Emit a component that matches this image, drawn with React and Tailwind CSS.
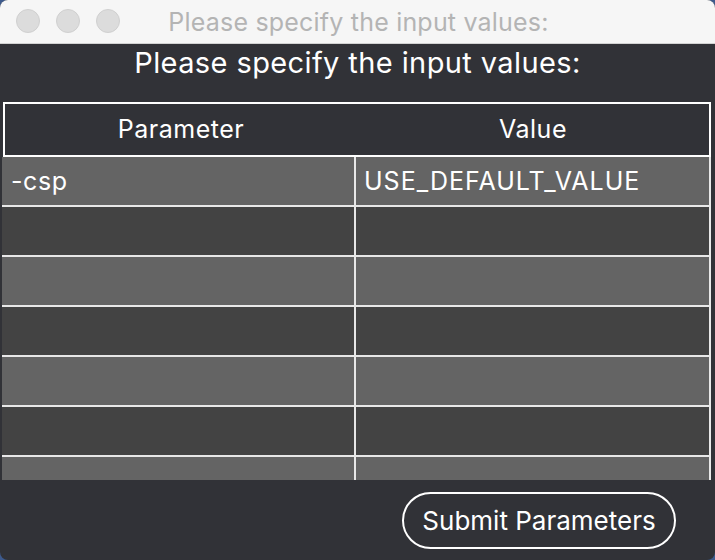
export default function App() {
  const rows = [
    ["-csp", "USE_DEFAULT_VALUE"],
    ["", ""],
    ["", ""],
    ["", ""],
    ["", ""],
    ["", ""],
    ["", ""],
  ];
  return (
    <div className="w-[715px] h-[560px] bg-[#3d5a8c] overflow-hidden leading-none" style={{ fontFamily: 'Inter, "Liberation Sans", Arial, sans-serif' }}>
      <div className="w-[715px] h-[560px] rounded-[8px] overflow-hidden flex flex-col bg-[#313237]">
        <div className="h-[44px] shrink-0 bg-[#f6f6f6] border-b border-[#d2d2d2] relative flex items-center justify-center">
          <div className="absolute left-[16px] top-[9px] flex gap-[16px]">
            <div className="w-[24px] h-[24px] rounded-full bg-[#dcdcdc] border border-[#d0d0d0]" />
            <div className="w-[24px] h-[24px] rounded-full bg-[#dcdcdc] border border-[#d0d0d0]" />
            <div className="w-[24px] h-[24px] rounded-full bg-[#dcdcdc] border border-[#d0d0d0]" />
          </div>
          <span className="text-[25px] tracking-[0.2px] text-[#b4b4b4] pl-[2px] pt-[2px]">Please specify the input values:</span>
        </div>
        <div className="h-[58px] shrink-0 flex items-start justify-center pt-[4px]">
          <span className="text-[29px] tracking-[0.4px] text-white">Please specify the input values:</span>
        </div>
        <div className="h-[378px] shrink-0 overflow-hidden pl-[2px] pr-[4px]">
          <div className="h-[55px] ml-[1px] border-2 border-white flex text-white text-[25px] tracking-[0.5px]">
            <div className="w-[352px] flex items-center justify-center">Parameter</div>
            <div className="flex-1 flex items-center justify-center">Value</div>
          </div>
          {rows.map((r, i) => (
            <div
              key={i}
              className={`h-[50px] shrink-0 flex border-b-2 border-[#e8e8e8] text-white text-[25px] ${i % 2 === 0 ? "bg-[#646464]" : "bg-[#434343]"}`}
            >
              <div className="w-[354px] border-r-2 border-[#e8e8e8] flex items-center pl-[9px] tracking-[0.6px]">{r[0]}</div>
              <div className="flex-1 border-r-2 border-[#e8e8e8] flex items-center pl-[8px] tracking-[1px]">{r[1]}</div>
            </div>
          ))}
        </div>
        <div className="flex-1 flex justify-end items-start pt-[12px] pr-[39px]">
          <button className="w-[274px] h-[57px] rounded-full border-2 border-white text-white text-[26px] flex items-center justify-center">
            Submit Parameters
          </button>
        </div>
      </div>
    </div>
  );
}
